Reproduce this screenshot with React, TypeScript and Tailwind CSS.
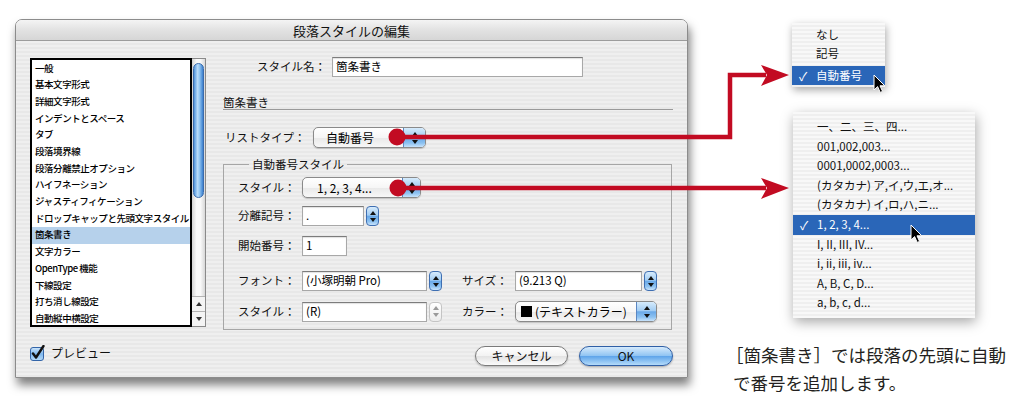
import React from "react";

const FONT = "font-['Noto_Sans_CJK_JP','Noto_Sans',sans-serif]";

const STRIPES =
  "bg-[repeating-linear-gradient(180deg,#efefef_0px,#efefef_2px,#e8e8e8_2px,#e8e8e8_4px)]";
const BLUE_CAP =
  "bg-[linear-gradient(180deg,#d6ebfc_0%,#a3cdf3_45%,#6aa9e8_52%,#8dc2f1_80%,#c8e3fb_100%)]";

const categories = [
  "一般",
  "基本文字形式",
  "詳細文字形式",
  "インデントとスペース",
  "タブ",
  "段落境界線",
  "段落分離禁止オプション",
  "ハイフネーション",
  "ジャスティフィケーション",
  "ドロップキャップと先頭文字スタイル",
  "箇条書き",
  "文字カラー",
  "OpenType 機能",
  "下線設定",
  "打ち消し線設定",
  "自動縦中横設定",
];

const numberStyles = [
  "一、二、三、四...",
  "001,002,003...",
  "0001,0002,0003...",
  "(カタカナ) ア,イ,ウ,エ,オ...",
  "(カタカナ) イ,ロ,ハ,ニ...",
  "1, 2, 3, 4...",
  "I, II, III, IV...",
  "i, ii, iii, iv...",
  "A, B, C, D...",
  "a, b, c, d...",
];

function Tri({ up, color = "#111" }: { up?: boolean; color?: string }) {
  return (
    <svg width="6" height="4" viewBox="0 0 6 4" className="block">
      <path d={up ? "M3 0L6 4H0Z" : "M0 0H6L3 4Z"} fill={color} />
    </svg>
  );
}

function PopupButton({
  width,
  cap,
  children,
}: {
  width: string;
  cap: string;
  children: React.ReactNode;
}) {
  return (
    <div
      className={`flex h-[21px] ${width} items-stretch overflow-hidden rounded-[5px] border border-[#8a8a8a] bg-[linear-gradient(180deg,#ffffff_0%,#f6f6f6_50%,#e9e9e9_52%,#f7f7f7_100%)] shadow-[0_1px_1px_rgba(0,0,0,0.18)]`}
    >
      <div className="flex flex-1 items-center pl-[12px] text-[12px] leading-none text-black">
        {children}
      </div>
      <div
        className={`${cap} flex flex-col items-center justify-center gap-[4px] border-l border-[#5a86c2] ${BLUE_CAP}`}
      >
        <Tri up />
        <Tri />
      </div>
    </div>
  );
}

function Field({ width, children }: { width: string; children?: React.ReactNode }) {
  return (
    <div
      className={`h-[20px] ${width} border border-[#a8a8a8] border-t-[#7c7c7c] bg-white px-[3px] pt-[1px] text-[11.5px] leading-[14px] text-black shadow-[inset_0_1px_1px_rgba(0,0,0,0.12)]`}
    >
      {children}
    </div>
  );
}

function Stepper({ disabled }: { disabled?: boolean }) {
  return (
    <div
      className={`flex h-[20px] w-[13px] flex-col items-center justify-center gap-[3px] rounded-[4px] border ${
        disabled
          ? "border-[#c4c4c4] bg-[linear-gradient(180deg,#ffffff,#ececec)]"
          : `border-[#3f6fb2] ${BLUE_CAP}`
      }`}
    >
      <Tri up color={disabled ? "#9a9a9a" : "#111"} />
      <Tri color={disabled ? "#9a9a9a" : "#111"} />
    </div>
  );
}

function Combo({
  width,
  disabled,
  children,
}: {
  width: string;
  disabled?: boolean;
  children?: React.ReactNode;
}) {
  return (
    <div className={`flex ${width} items-center gap-[2px]`}>
      <div className="flex-1">
        <Field width="w-full">{children}</Field>
      </div>
      <Stepper disabled={disabled} />
    </div>
  );
}

function Label({ width, children }: { width: string; children: React.ReactNode }) {
  return (
    <div className={`${width} shrink-0 text-[11.5px] leading-none text-[#111]`}>
      {children}
    </div>
  );
}

function CategoryList() {
  return (
    <div className="flex h-[269px] w-[176px]">
      <div className="w-[162px] overflow-hidden border-2 border-black bg-white">
        {categories.map((c, i) => (
          <div
            key={c}
            className={`flex h-[16.7px] items-center whitespace-nowrap pl-[3px] text-[9.5px] font-medium leading-none tracking-[-0.45px] text-black ${
              i === 10 ? "bg-[#b6d1eb]" : ""
            }`}
          >
            {c}
          </div>
        ))}
      </div>
      <div className="flex w-[14px] flex-col border-y border-r border-[#8a8a8a] bg-[#f4f4f4]">
        <div className="flex-1 bg-[linear-gradient(90deg,#d4d4d4,#f9f9f9_35%,#f9f9f9_65%,#d8d8d8)] px-[1px] pt-[4px]">
          <div className="h-[135px] rounded-full border border-[#3a6cae] bg-[linear-gradient(90deg,#4f93db,#b9dcfa_40%,#93c6f2_60%,#3b80cf)]" />
        </div>
        <div className="flex h-[15px] items-center justify-center border-t border-[#b4b4b4]">
          <Tri up color="#333" />
        </div>
        <div className="flex h-[15px] items-center justify-center border-t border-[#b4b4b4]">
          <Tri color="#333" />
        </div>
      </div>
    </div>
  );
}

function Checkbox() {
  return (
    <svg width="17" height="16" viewBox="0 0 17 16" className="block">
      <defs>
        <linearGradient id="cbx" x1="0" y1="0" x2="0" y2="1">
          <stop offset="0" stopColor="#cfe6fb" />
          <stop offset="0.5" stopColor="#7fb8ee" />
          <stop offset="1" stopColor="#b7dbf9" />
        </linearGradient>
      </defs>
      <rect x="0.5" y="2.5" width="13" height="13" rx="2.5" fill="url(#cbx)" stroke="#3465a8" />
      <path d="M3 8.5 L6 12.5 L13.5 1" fill="none" stroke="#111" strokeWidth="2.4" strokeLinecap="round" strokeLinejoin="round" />
    </svg>
  );
}

function Dialog() {
  return (
    <div className="ml-[15px] mt-[19px] flex h-[359px] w-[673px] shrink-0 flex-col overflow-hidden rounded-t-[7px] border border-[#8c8c8c] shadow-[2px_7px_10px_rgba(0,0,0,0.5)]">
      <div className="flex h-[21px] shrink-0 items-center justify-center border-b border-[#9c9c9c] bg-[linear-gradient(180deg,#f4f4f4,#e2e2e2_50%,#d6d6d6)] text-[13px] leading-none text-[#111]">
        段落スタイルの編集
      </div>
      <div className={`flex flex-1 ${STRIPES}`}>
        {/* left column: categories and preview */}
        <div className="flex flex-col pl-[14px] pt-[17px]">
          <CategoryList />
          <div className="mt-[18px] flex items-center gap-[4px]">
            <Checkbox />
            <span className="text-[12px] leading-none text-[#111]">プレビュー</span>
          </div>
        </div>

        {/* right column: settings */}
        <div className="ml-[17px] flex flex-col pt-[16px]">
          <div className="flex items-center pl-[34px]">
            <Label width="w-[75px]">スタイル名：</Label>
            <Field width="w-[251px]">箇条書き</Field>
          </div>

          <div className="mt-[19px] h-[14px] w-[450px] border-b border-[#9a9a9a] text-[11.5px] leading-[12px] text-[#111]">
            箇条書き
          </div>

          <div className="mt-[17px] flex items-center pl-[2px]">
            <Label width="w-[88px]">リストタイプ：</Label>
            <PopupButton width="w-[113px]" cap="w-[22px]">
              自動番号
            </PopupButton>
          </div>

          <fieldset className="mt-[9px] h-[173px] w-[449px] border border-[#a6a6a6] pl-[14px]">
            <legend className="ml-[11px] px-[3px] text-[11.5px] leading-[14px] text-[#111]">
              自動番号スタイル
            </legend>
            <div className="mt-[6px] flex items-center">
              <Label width="w-[64px]">スタイル：</Label>
              <PopupButton width="w-[119px]" cap="w-[18px]">
                <span className="pl-[2px]">1, 2, 3, 4...</span>
              </PopupButton>
            </div>
            <div className="mt-[8px] flex items-center">
              <Label width="w-[64px]">分離記号：</Label>
              <Combo width="w-[77px]">.</Combo>
            </div>
            <div className="mt-[10px] flex items-center">
              <Label width="w-[64px]">開始番号：</Label>
              <Field width="w-[45px]">1</Field>
            </div>
            <div className="mt-[15px] flex items-center">
              <Label width="w-[64px]">フォント：</Label>
              <Combo width="w-[140px]">(小塚明朝 Pro)</Combo>
              <div className="ml-[20px]">
                <Label width="w-[53px]">サイズ：</Label>
              </div>
              <Combo width="w-[142px]">(9.213 Q)</Combo>
            </div>
            <div className="mt-[10px] flex items-center">
              <Label width="w-[64px]">スタイル：</Label>
              <Combo width="w-[140px]" disabled>
                (R)
              </Combo>
              <div className="ml-[20px]">
                <Label width="w-[53px]">カラー：</Label>
              </div>
              <PopupButton width="w-[142px]" cap="w-[20px]">
                <span className="-ml-[7px] flex items-center gap-[3px]">
                  <span className="inline-block h-[11px] w-[11px] bg-black" />
                  (テキストカラー)
                </span>
              </PopupButton>
            </div>
          </fieldset>

          <div className="mt-[16px] flex items-center gap-[11px] pl-[252px]">
            <div className="flex h-[20px] w-[93px] items-center justify-center rounded-full border border-[#7a7a7a] bg-[linear-gradient(180deg,#ffffff,#f2f2f2_50%,#e3e3e3_52%,#fbfbfb)] text-[12px] leading-none text-[#111] shadow-[0_1px_2px_rgba(0,0,0,0.25)]">
              キャンセル
            </div>
            <div className="flex h-[20px] w-[94px] items-center justify-center rounded-full border border-[#2f5fa6] bg-[linear-gradient(180deg,#d5eafc,#8ec3f2_50%,#5fa5ea_52%,#b4dbfa)] text-[12px] leading-none text-[#111] shadow-[0_1px_2px_rgba(0,0,0,0.3)]">
              OK
            </div>
          </div>
        </div>
      </div>
    </div>
  );
}

function MenuRow({
  selected,
  height,
  children,
}: {
  selected?: boolean;
  height: string;
  children: React.ReactNode;
}) {
  return (
    <div
      className={`flex ${height} items-center whitespace-nowrap text-[11.5px] leading-none ${
        selected ? "bg-[#2a66b8] text-white" : "text-[#111]"
      }`}
    >
      <span className="w-[24px] pl-[7px] text-[12px]">{selected ? "✓" : ""}</span>
      {children}
    </div>
  );
}

function Annotations() {
  return (
    <div className="flex flex-col pl-[45px]">
      <div
        className={`ml-[59px] mt-[23px] flex h-[64px] w-[93px] flex-col pt-[2px] shadow-[1px_3px_8px_rgba(0,0,0,0.35)] bg-[repeating-linear-gradient(180deg,#f8f8f8_0px,#f8f8f8_2px,#efefef_2px,#efefef_4px)]`}
      >
        <MenuRow height="h-[19px]">なし</MenuRow>
        <MenuRow height="h-[19px]">記号</MenuRow>
        <div className="mt-[3px]">
          <MenuRow height="h-[19px]" selected>
            自動番号
          </MenuRow>
        </div>
      </div>

      <div className="ml-[60px] mt-[25px] flex h-[206px] w-[182px] flex-col pt-[5px] shadow-[1px_4px_12px_rgba(0,0,0,0.35)] bg-[repeating-linear-gradient(180deg,#f8f8f8_0px,#f8f8f8_2px,#efefef_2px,#efefef_4px)]">
        {numberStyles.map((s, i) => (
          <MenuRow key={s} height="h-[19.6px]" selected={i === 5}>
            {s}
          </MenuRow>
        ))}
      </div>

      <div className="mt-[23px] whitespace-nowrap text-[17.5px] leading-[28px] text-[#231f20]">
        <div className="-ml-[7px]">［箇条書き］では段落の先頭に自動</div>
        <div>で番号を追加します。</div>
      </div>
    </div>
  );
}

function Cursor({ x, y }: { x: number; y: number }) {
  return (
    <path
      transform={`translate(${x} ${y})`}
      d="M0 0 L0 15 L3.6 11.6 L6.2 17.4 L8.6 16.4 L6 10.8 L10.8 10.8 Z"
      fill="#000"
      stroke="#fff"
      strokeWidth="1"
      strokeLinejoin="round"
    />
  );
}

function Leaders() {
  const red = "#c20b22";
  return (
    <svg
      className="pointer-events-none absolute left-0 top-0"
      width="1014"
      height="401"
      viewBox="0 0 1014 401"
    >
      <polyline
        points="397,137 730,137 730,75 766,75"
        fill="none"
        stroke={red}
        strokeWidth="4.5"
        strokeLinejoin="miter"
      />
      <path d="M761 65 L789 75 L761 86 L767 75 Z" fill={red} />
      <circle cx="397" cy="137" r="8.5" fill={red} />

      <line x1="398" y1="188" x2="766" y2="188" stroke={red} strokeWidth="4.5" />
      <path d="M761 178 L789 188 L761 199 L767 188 Z" fill={red} />
      <circle cx="398" cy="188" r="8.5" fill={red} />

      <Cursor x={874} y={75} />
      <Cursor x={911} y={225} />
    </svg>
  );
}

export default function App() {
  return (
    <div className={`relative flex h-[401px] w-[1014px] overflow-hidden bg-white ${FONT}`}>
      <Dialog />
      <Annotations />
      <Leaders />
    </div>
  );
}
